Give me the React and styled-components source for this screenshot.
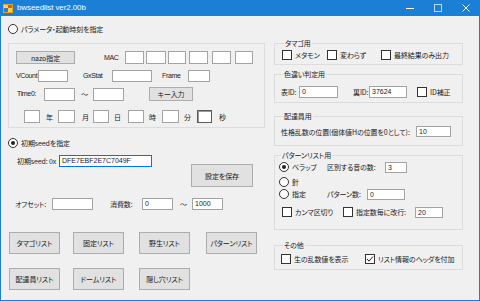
import React from "react";
import styled, { createGlobalStyle } from "styled-components";

const GlobalStyle = createGlobalStyle`
  html, body {
    margin: 0;
    padding: 0;
    background: #ffffff;
  }
`;

const Window = styled.div`
  width: 480px;
  height: 301px;
  box-sizing: border-box;
  border: 1px solid #1b7fd6;
  border-top: none;
  background: #f0f0f0;
  display: flex;
  flex-direction: column;
  font-family: "Noto Sans CJK JP", "Noto Sans", sans-serif;
  font-feature-settings: "palt";
  font-size: 7px;
  letter-spacing: -0.1px;
  line-height: 12px;
  color: #1a1a1a;
  overflow: hidden;
`;

const TitleBar = styled.div`
  height: 16px;
  flex-shrink: 0;
  margin: 0 -1px;
  background: #1b7fd6;
  display: flex;
  align-items: center;
  color: #fff;
`;

const TitleText = styled.span`
  margin-left: 4px;
  font-family: "Liberation Sans", "DejaVu Sans", sans-serif;
  font-size: 8px;
  letter-spacing: -0.1px;
`;

const Controls = styled.div`
  margin-left: auto;
  display: flex;
  height: 16px;
`;

const ControlBtn = styled.div`
  width: 28px;
  height: 16px;
  display: flex;
  align-items: center;
  justify-content: center;
`;

const Body = styled.div`
  display: flex;
  padding-left: 7px;
  gap: 9px;
`;

const LeftCol = styled.div`
  width: 257px;
  display: flex;
  flex-direction: column;
`;

const RightCol = styled.div`
  width: 189px;
  display: flex;
  flex-direction: column;
`;

const Row = styled.div`
  display: flex;
  align-items: center;
  height: ${(p) => p.$h || 12}px;
  margin-top: ${(p) => p.$mt || 0}px;
  margin-left: ${(p) => p.$ml || 0}px;
`;

const Text = styled.span`
  flex-shrink: 0;
  white-space: nowrap;
  width: ${(p) => (p.$w ? `${p.$w}px` : "auto")};
  margin-left: ${(p) => p.$ml || 0}px;
  font-family: ${(p) =>
    p.$latin ? '"Liberation Sans", sans-serif' : "inherit"};
  letter-spacing: ${(p) => (p.$latin ? "-0.35px" : "inherit")};
`;

const TextBox = styled.div`
  flex-shrink: 0;
  box-sizing: border-box;
  width: ${(p) => p.$w}px;
  height: ${(p) => p.$h || 12}px;
  margin-left: ${(p) => p.$ml || 0}px;
  background: #fff;
  border: 1px solid ${(p) => (p.$focus ? "#0078d7" : p.$sunken ? "#5a5a5a" : "#a3a3a3")};
  box-shadow: ${(p) => (p.$sunken ? "inset 1px 1px 0 #9a9a9a" : "none")};
  padding-left: 2px;
  font-family: "Liberation Sans", "Noto Sans", sans-serif;
  font-size: 7px;
  letter-spacing: 0;
  line-height: ${(p) => (p.$h || 12) - 2}px;
  white-space: nowrap;
  overflow: hidden;
`;

const Button = styled.div`
  flex-shrink: 0;
  box-sizing: border-box;
  width: ${(p) => p.$w}px;
  height: ${(p) => p.$h || 22}px;
  margin-left: ${(p) => p.$ml || 0}px;
  margin-top: ${(p) => p.$mt || 0}px;
  background: #e1e1e1;
  border: 1px solid #adadad;
  display: flex;
  align-items: center;
  justify-content: center;
  white-space: nowrap;
`;

const Option = styled.label`
  flex-shrink: 0;
  display: flex;
  align-items: center;
  gap: 3px;
  white-space: nowrap;
  width: ${(p) => (p.$w ? `${p.$w}px` : "auto")};
  margin-left: ${(p) => p.$ml || 0}px;
`;

const RadioMark = styled.span`
  position: relative;
  box-sizing: border-box;
  width: 10px;
  height: 10px;
  border-radius: 50%;
  border: 1px solid #333;
  background: #fff;
  flex-shrink: 0;
  &::after {
    content: "";
    display: ${(p) => (p.$on ? "block" : "none")};
    position: absolute;
    left: 2px;
    top: 2px;
    width: 4px;
    height: 4px;
    border-radius: 50%;
    background: #222;
  }
`;

const CheckMark = styled.span`
  box-sizing: border-box;
  width: 10px;
  height: 10px;
  border: 1px solid #333;
  background: #fff;
  flex-shrink: 0;
  display: flex;
  align-items: center;
  justify-content: center;
`;

const PlainGroup = styled.div`
  box-sizing: border-box;
  width: 257px;
  margin-top: ${(p) => p.$mt || 0}px;
  border: 1px solid #dcdcdc;
  padding: 7px 0 4px 7px;
`;

const Group = styled.fieldset`
  box-sizing: border-box;
  width: 189px;
  min-width: 0;
  margin: ${(p) => p.$mt || 0}px 0 0 0;
  border: 1px solid #dcdcdc;
  padding: 0 0 ${(p) => p.$pb || 4}px ${(p) => p.$pl || 6}px;
`;

const Legend = styled.legend`
  padding: 0 1px;
  margin-left: 2px;
  line-height: 12px;
  height: 12px;
`;

const Radio = ({ on, children, w, ml }) => (
  <Option $w={w} $ml={ml}>
    <RadioMark $on={on} />
    {children}
  </Option>
);

const Check = ({ on, children, w, ml }) => (
  <Option $w={w} $ml={ml}>
    <CheckMark>
      {on && (
        <svg width="8" height="8" viewBox="0 0 8 8">
          <path d="M1 4 L3 6.2 L7 1.5" fill="none" stroke="#222" strokeWidth="1" />
        </svg>
      )}
    </CheckMark>
    {children}
  </Option>
);

const AppIcon = () => (
  <svg width="10" height="9" viewBox="0 0 10 9" style={{ marginLeft: 3 }}>
    <rect x="0" y="0" width="10" height="9" fill="#f0a020" />
    <rect x="1" y="1" width="4" height="3" fill="#ffe060" />
    <rect x="5" y="1" width="4" height="3" fill="#e05a20" />
    <rect x="1" y="4" width="4" height="4" fill="#3a78d0" />
    <rect x="5" y="4" width="4" height="4" fill="#ffd040" />
  </svg>
);

const macBoxes = [
  { w: 19, ml: 0 },
  { w: 20, ml: 2 },
  { w: 18, ml: 2 },
  { w: 19, ml: 3 },
  { w: 19, ml: 4 },
  { w: 18, ml: 4 },
];

const listButtons = [
  [
    { label: "タマゴリスト", ml: 1 },
    { label: "固定リスト", ml: 13 },
    { label: "野生リスト", ml: 15 },
    { label: "パターンリスト", ml: 16 },
  ],
  [
    { label: "配達員リスト", ml: 1 },
    { label: "ドームリスト", ml: 13 },
    { label: "隠し穴リスト", ml: 15 },
  ],
];

export default function App() {
  return (
    <>
      <GlobalStyle />
      <Window>
        <TitleBar>
          <AppIcon />
          <TitleText>bwseedlist ver2.00b</TitleText>
          <Controls>
            <ControlBtn>
              <svg width="10" height="10" viewBox="0 0 10 10">
                <path d="M1 5.5 H9" stroke="#fff" strokeWidth="1" />
              </svg>
            </ControlBtn>
            <ControlBtn>
              <svg width="10" height="10" viewBox="0 0 10 10">
                <rect x="1.5" y="1.5" width="7" height="7" fill="none" stroke="#bcd8f2" strokeWidth="1" />
              </svg>
            </ControlBtn>
            <ControlBtn>
              <svg width="10" height="10" viewBox="0 0 10 10">
                <path d="M1.5 1.5 L8.5 8.5 M8.5 1.5 L1.5 8.5" stroke="#fff" strokeWidth="1" />
              </svg>
            </ControlBtn>
          </Controls>
        </TitleBar>

        <Body>
          <LeftCol>
            <Row $mt={7}>
              <Radio>パラメータ・起動時刻を指定</Radio>
            </Row>

            <PlainGroup $mt={8}>
              <Row $h={13}>
                <Button $w={59} $h={13}>nazo指定</Button>
                <Text $latin $ml={29} $w={21}>MAC</Text>
                {macBoxes.map((b, i) => (
                  <TextBox key={i} $w={b.w} $ml={b.ml} $h={13} />
                ))}
              </Row>
              <Row $mt={6}>
                <Text $latin $w={22}>VCount</Text>
                <TextBox $w={30} />
                <Text $latin $ml={15} $w={29}>GxStat</Text>
                <TextBox $w={40} />
                <Text $latin $ml={10} $w={26}>Frame</Text>
                <TextBox $w={22} />
              </Row>
              <Row $mt={5} $h={14}>
                <Text $latin $ml={1} $w={27}>Time0:</Text>
                <TextBox $w={31} $h={13} />
                <Text $ml={6} $w={12}>〜</Text>
                <TextBox $w={31} $h={13} />
                <Button $ml={25} $w={44} $h={14}>キー入力</Button>
              </Row>
              <Row $mt={9} $h={13}>
                <TextBox $ml={8} $w={16} $h={13} />
                <Text $ml={6} $w={12}>年</Text>
                <TextBox $w={17} $h={13} />
                <Text $ml={7} $w={11}>月</Text>
                <TextBox $w={16} $h={13} />
                <Text $ml={5} $w={14}>日</Text>
                <TextBox $w={16} $h={13} />
                <Text $ml={5} $w={13}>時</Text>
                <TextBox $w={17} $h={13} />
                <Text $ml={5} $w={13}>分</Text>
                <TextBox $w={15} $h={13} $sunken />
                <Text $ml={7}>秒</Text>
              </Row>
            </PlainGroup>

            <Row $mt={9}>
              <Radio on>初期seedを指定</Radio>
            </Row>
            <Row $mt={6}>
              <Text $ml={9} $w={42}>初期seed: 0x</Text>
              <TextBox $w={93} $focus>DFE7EBF2E7C7049F</TextBox>
            </Row>
            <Button $mt={-3} $ml={183} $w={62} $h={23}>設定を保存</Button>
            <Row $mt={11}>
              <Text $ml={7} $w={37}>オフセット:</Text>
              <TextBox $w={41} />
              <Text $ml={17} $w={32}>消費数:</Text>
              <TextBox $w={31}>0</TextBox>
              <Text $ml={7} $w={12}>〜</Text>
              <TextBox $w={31}>1000</TextBox>
            </Row>

            {listButtons.map((row, ri) => (
              <Row key={ri} $h={22} $mt={ri === 0 ? 22 : 14}>
                {row.map((b) => (
                  <Button key={b.label} $w={51} $ml={b.ml}>
                    {b.label}
                  </Button>
                ))}
              </Row>
            ))}
          </LeftCol>

          <RightCol>
            <Group $mt={21} $pl={7} $pb={4}>
              <Legend>タマゴ用</Legend>
              <Row $h={11}>
                <Check w={45}>メタモン</Check>
                <Check w={54}>変わらず</Check>
                <Check>最終結果のみ出力</Check>
              </Row>
            </Group>

            <Group $mt={3} $pb={4}>
              <Legend>色違い判定用</Legend>
              <Row $mt={6}>
                <Text $w={18}>表ID:</Text>
                <TextBox $w={39}>0</TextBox>
                <Text $ml={15} $w={16}>裏ID:</Text>
                <TextBox $w={38}>37624</TextBox>
                <Check ml={10}>ID補正</Check>
              </Row>
            </Group>

            <Group $mt={7} $pb={8}>
              <Legend>配達員用</Legend>
              <Row $mt={4} $h={11}>
                <Text $w={135}>性格乱数の位置(個体値Hの位置を0として):</Text>
                <TextBox $w={35} $h={11}>10</TextBox>
              </Row>
            </Group>

            <Group $mt={3} $pl={4} $pb={11}>
              <Legend>パターンリスト用</Legend>
              <Row>
                <Radio on w={48}>ベラップ</Radio>
                <Text $w={58}>区別する音の数:</Text>
                <TextBox $w={22} $h={11}>3</TextBox>
              </Row>
              <Row $mt={3}>
                <Radio>針</Radio>
              </Row>
              <Row>
                <Radio w={48}>指定</Radio>
                <Text $w={40}>パターン数:</Text>
                <TextBox $w={38} $h={11}>0</TextBox>
              </Row>
              <Row $mt={6}>
                <Check ml={3} w={61}>カンマ区切り</Check>
                <Check w={72}>指定数毎に改行:</Check>
                <TextBox $w={28} $h={11}>20</TextBox>
              </Row>
            </Group>

            <Group $mt={9} $pb={4}>
              <Legend>その他</Legend>
              <Row $mt={2}>
                <Check w={84}>生の乱数値を表示</Check>
                <Check on>リスト情報のヘッダを付加</Check>
              </Row>
            </Group>
          </RightCol>
        </Body>
      </Window>
    </>
  );
}
